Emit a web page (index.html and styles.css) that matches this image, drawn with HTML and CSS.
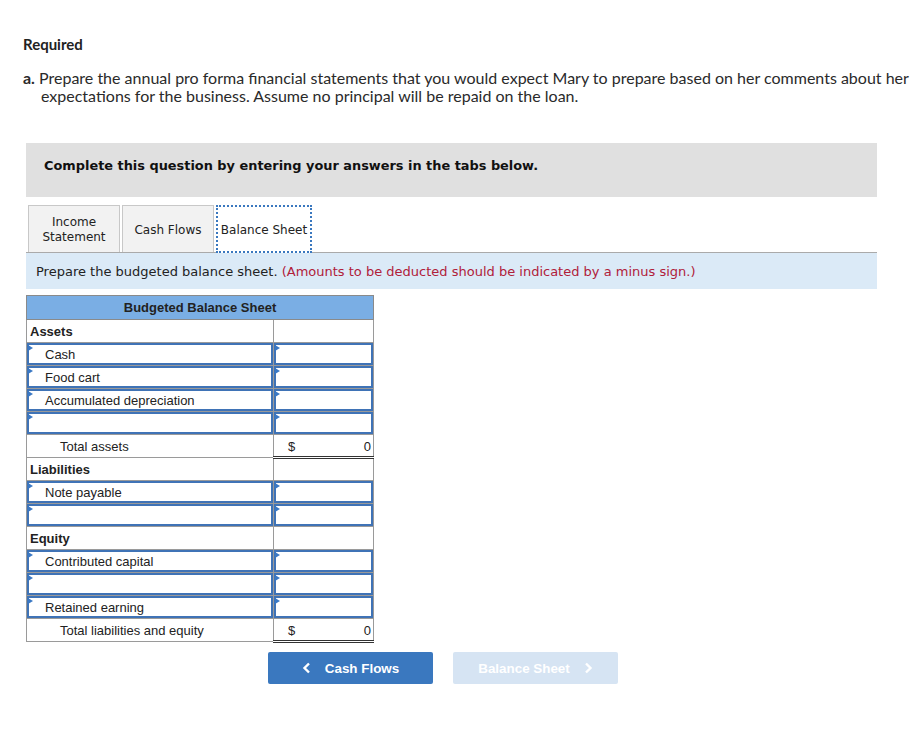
FILE: index.html
```html
<!DOCTYPE html>
<html>
<head>
<meta charset="utf-8">
<link rel="stylesheet" href="styles.css">
</head>
<body>
<div class="page">
  <h3 class="req">Required</h3>
  <p class="task"><b>a.</b> Prepare the annual pro forma financial statements that you would expect Mary to prepare based on her comments about her expectations for the business. Assume no principal will be repaid on the loan.</p>

  <div class="instr">Complete this question by entering your answers in the tabs below.</div>

  <div class="tabs">
    <div class="tab">Income<br>Statement</div>
    <div class="tab">Cash Flows</div>
    <div class="tab active">Balance Sheet</div>
  </div>
  <div class="band">Prepare the budgeted balance sheet. <span class="red">(Amounts to be deducted should be indicated by a minus sign.)</span></div>

  <table class="bs">
    <tr><th colspan="2">Budgeted Balance Sheet</th></tr>
    <tr><td class="lbl head">Assets</td><td class="val"></td></tr>
    <tr><td class="lbl in i1">Cash</td><td class="val in"></td></tr>
    <tr><td class="lbl in i1">Food cart</td><td class="val in"></td></tr>
    <tr><td class="lbl in i1">Accumulated depreciation</td><td class="val in"></td></tr>
    <tr><td class="lbl in i1"></td><td class="val in"></td></tr>
    <tr><td class="lbl i2">Total assets</td><td class="val tot"><span>$</span><span>0</span></td></tr>
    <tr><td class="lbl head">Liabilities</td><td class="val"></td></tr>
    <tr><td class="lbl in i1">Note payable</td><td class="val in"></td></tr>
    <tr><td class="lbl in i1"></td><td class="val in"></td></tr>
    <tr><td class="lbl head">Equity</td><td class="val"></td></tr>
    <tr><td class="lbl in i1">Contributed capital</td><td class="val in"></td></tr>
    <tr><td class="lbl in i1"></td><td class="val in"></td></tr>
    <tr><td class="lbl in i1">Retained earning</td><td class="val in"></td></tr>
    <tr><td class="lbl i2">Total liabilities and equity</td><td class="val tot"><span>$</span><span>0</span></td></tr>
  </table>

  <div class="nav">
    <button class="btn prev"><svg class="chev" width="9" height="12" viewBox="0 0 9 12"><path d="M7 1.5 L2.5 6 L7 10.5" fill="none" stroke="#fff" stroke-width="2.4"/></svg>Cash Flows</button>
    <button class="btn next">Balance Sheet<svg class="chev r" width="9" height="12" viewBox="0 0 9 12"><path d="M2 1.5 L6.5 6 L2 10.5" fill="none" stroke="#fff" stroke-width="2.4"/></svg></button>
  </div>
</div>
</body>
</html>
```
FILE: styles.css
```css
html, body { margin: 0; padding: 0; background: #fff; }
.page { padding: 0 0 0 23px; width: 888px; font-family: Lato, "Liberation Sans", sans-serif; color: #222; }
.req { margin: 0; padding-top: 35px; font-size: 15px; font-weight: bold; line-height: 18px; }
.task { margin: 16px 0 0 0; font-size: 16px; line-height: 18px; padding-left: 18px; text-indent: -18px; font-weight: 400; color: #2a2a2a; }
.task b { font-weight: bold; }
.instr { margin: 38px 0 0 3px; width: 851px; height: 54px; box-sizing: border-box; background: #e0e0e0; padding: 15px 0 0 18px; font-family: "DejaVu Sans", Verdana, sans-serif; font-weight: bold; font-size: 12.9px; color: #111; }
.tabs { display: flex; margin: 8px 0 0 3px; gap: 2px; align-items: flex-end; height: 48px; border-bottom: 1px solid #aaa; width: 851px; padding-left: 2px; box-sizing: border-box; }
.tab { height: 47px; box-sizing: border-box; background: #f2f2f2; border: 1px solid #c8c8c8; border-bottom: none; font-family: "DejaVu Sans", Verdana, sans-serif; font-size: 12px; color: #222; display: flex; align-items: center; justify-content: center; text-align: center; line-height: 15px; padding: 2px 6px 0; }
.tab:nth-child(1) { width: 92px; }
.tab:nth-child(2) { width: 92px; }
.tab.active { background: #fff; width: 96px; border: 2px dotted #3a78bf; height: 48px; margin-bottom: -1px; padding: 2px 2px 0; }
.band { margin-left: 3px; width: 851px; height: 36px; box-sizing: border-box; background: #dbeaf7; padding: 11px 0 0 10px; font-family: "DejaVu Sans", Verdana, sans-serif; font-size: 13px; color: #222; }
.red { color: #b0203a; }
.bs { margin: 6px 0 0 3px; border-collapse: collapse; font-family: "Liberation Sans", Arial, sans-serif; font-size: 13px; color: #222; }
.bs th { background: #7aaee4; height: 23px; border: 1px solid #8a8a8a; font-weight: bold; font-size: 13px; padding: 0; }
.bs td { height: 23px; border: 1px solid #9a9a9a; padding: 0; box-sizing: border-box; position: relative; }
.lbl { width: 247px; padding-left: 3px !important; }
.val { width: 100px; }
.head { font-weight: bold; }
.i1 { padding-left: 18px !important; }
.i2 { padding-left: 33px !important; }
.in { box-shadow: inset 0 0 0 2px #3f73b6; }
.in::before { content: ""; position: absolute; left: 1px; top: 2px; border-left: 5px solid #3a78c4; border-top: 3px solid transparent; border-bottom: 3px solid transparent; }
.tot { border-bottom: 3px double #333 !important; }
.tot span:first-child { position: absolute; left: 14px; top: 4px; }
.tot span:last-child { position: absolute; right: 2px; top: 4px; }
.nav { display: flex; gap: 20px; margin: 9px 0 0 245px; }
.btn { width: 165px; height: 32px; border: none; border-radius: 2px; font-family: "Liberation Sans", Arial, sans-serif; font-weight: bold; font-size: 13.4px; color: #fff; padding: 0; display: flex; align-items: center; justify-content: center; }
.prev { background: #3a78bf; }
.next { background: #d6e4f3; }
.chev { margin: 0 14px 0 0; }
.chev.r { margin: 0 0 0 14px; }
```
